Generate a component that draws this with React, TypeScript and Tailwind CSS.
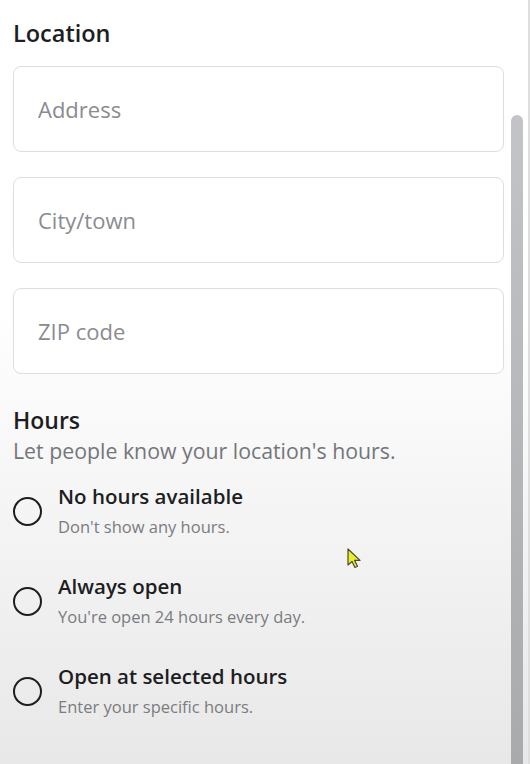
import { useState } from 'react';

const fieldNames = ['Address', 'City/town', 'ZIP code'];

const hourOptions = [
  { title: 'No hours available', hint: "Don't show any hours." },
  { title: 'Always open', hint: "You're open 24 hours every day." },
  { title: 'Open at selected hours', hint: 'Enter your specific hours.' },
];

function Cursor() {
  return (
    <svg className="absolute left-[346px] top-[547px]" width="18" height="24" viewBox="0 0 18 24">
      <path
        d="M2 2 L2 18 L6 14.5 L9 20.5 L11.5 19.3 L8.6 13.4 L14 13.4 Z"
        fill="#e8ef2a"
        stroke="#4a4a2a"
        strokeWidth="1.2"
        strokeLinejoin="round"
      />
    </svg>
  );
}

export default function App() {
  const [choice, setChoice] = useState<number | null>(null);

  return (
    <div
      className="relative w-[530px] h-[764px] overflow-hidden flex bg-gradient-to-b from-white from-40% to-[#e8e8e8] text-[#1c1e21]"
      style={{ fontFamily: '"Open Sans", "Noto Sans", sans-serif' }}
    >
      {/* Form column */}
      <div className="w-[505px] pl-[13px] pr-[1px] pt-[17px]">
        <h2 className="text-[23.5px] leading-[32px] font-semibold">Location</h2>

        <div className="mt-[17px] flex flex-col gap-[25px]">
          {fieldNames.map((name) => (
            <input
              key={name}
              placeholder={name}
              className="h-[86px] w-full rounded-[8px] border border-[#dcdee1] bg-white px-[24px] text-[22px] outline-none placeholder:text-[#8a8c90]"
            />
          ))}
        </div>

        <h2 className="mt-[30px] text-[23px] leading-[32px] font-semibold">Hours</h2>
        <p className="text-[21.3px] leading-[30px] text-[#74767a]">Let people know your location's hours.</p>

        <div className="mt-[15px] flex flex-col gap-[32px]">
          {hourOptions.map((opt, i) => (
            <button
              key={opt.title}
              onClick={() => setChoice(i)}
              className="flex items-center gap-[16px] text-left"
            >
              <span className="mt-[3px] flex h-[29px] w-[29px] shrink-0 items-center justify-center rounded-full border-[2.5px] border-[#1c1e21]">
                {choice === i && <span className="h-[15px] w-[15px] rounded-full bg-[#1877f2]" />}
              </span>
              <span className="flex flex-col">
                <span className="text-[20.5px] leading-[30px] font-semibold">{opt.title}</span>
                <span className="mt-[4px] text-[16.5px] leading-[24px] text-[#7a7c80]">{opt.hint}</span>
              </span>
            </button>
          ))}
        </div>
      </div>

      {/* Scrollbar */}
      <div className="ml-[6px] w-[12px] pt-[115px]">
        <div className="h-full w-full rounded-t-full bg-gradient-to-b from-[#c3c4c7] to-[#a9aaac]" />
      </div>

      <div className="ml-auto w-[2px] bg-[#dedede]" />

      <Cursor />
    </div>
  );
}
